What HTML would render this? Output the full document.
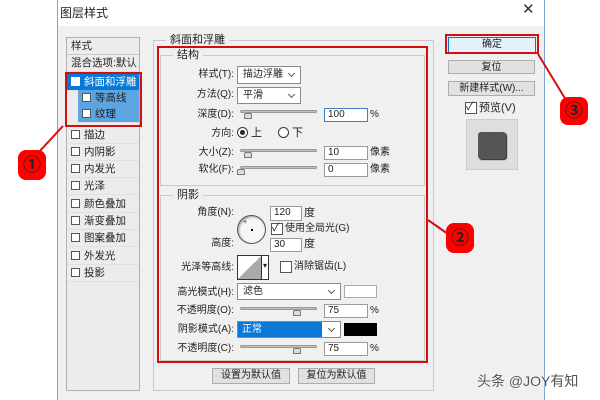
<!DOCTYPE html>
<html><head><meta charset="utf-8"><style>
*{margin:0;padding:0;box-sizing:border-box}
body{width:600px;height:400px;background:#fff;position:relative;overflow:hidden;font-family:"Liberation Sans","Noto Sans CJK SC",sans-serif;font-size:10px;color:#222}
.a{position:absolute}
.t{position:absolute;white-space:nowrap;line-height:12px}
.r{text-align:right}
.inp{position:absolute;background:#fff;border:1px solid #9a9a9a;font-size:10px;padding-left:3px;line-height:12px}
.dd{position:absolute;background:#fff;border:1px solid #8a8a8a;font-size:10px;padding-left:5px;line-height:15px}
.dd:after{content:"";position:absolute;right:6px;top:4px;width:4px;height:4px;border-right:1px solid #555;border-bottom:1px solid #555;transform:rotate(45deg)}
.sl{position:absolute;height:3px;background:#c0c0c0;border:1px solid #999;border-radius:2px}
.th{position:absolute;width:8px;height:6px;background:#ddd;border:1px solid #777;border-radius:2px 2px 0 0}
.cb{position:absolute;width:10px;height:10px;border:1px solid #555;background:#fff}
.btn{position:absolute;background:#e1e1e1;border:1px solid #adadad;text-align:center;font-size:10px;line-height:13px}
.grp{position:absolute;border:1px solid #c8c8c8}
.lbl{position:absolute;background:#f0f0f0;padding:0 4px;line-height:12px;font-size:11px}
.li{position:absolute;left:67px;width:72px;height:17px;border-bottom:1px solid #e0e0e0;line-height:16px;padding-left:4px;font-size:10.5px;white-space:nowrap;overflow:hidden}
.li i{display:inline-block;width:9px;height:9px;border:1px solid #555;background:#fff;margin-right:4px;vertical-align:-1px}
.num{position:absolute;background:#f00;border-radius:8px;color:#222;font-size:18px;text-align:center;font-weight:bold}
.red{position:absolute;border:2px solid #d01010}
</style></head><body>
<div class="a" style="left:57px;top:0;width:488px;height:400px;background:#f0f0f0;border-left:1px solid #7aa7d0;border-right:1px solid #7aa7d0"></div>
<div class="a" style="left:58px;top:0;width:486px;height:26px;background:#fff"></div>
<div class="t" style="left:60px;top:7px;font-size:12px">图层样式</div>
<div class="t" style="left:522px;top:4px;font-size:15px;color:#333">✕</div>

<div class="a" style="left:66px;top:37px;width:74px;height:354px;border:1px solid #b0b0b0;background:#ececec"></div>
<div class="li" style="top:38px;height:17px;border-bottom:1px solid #c8c8c8">样式</div>
<div class="li" style="top:55px">混合选项:默认</div>
<div class="li" style="top:74px;background:#0a78d7;color:#fff"><i style="border-color:#fff"></i>斜面和浮雕</div>
<div class="li" style="top:90px;left:78px;width:61px;background:#5ea4e0"><i></i>等高线</div>
<div class="li" style="top:106px;left:78px;width:61px;background:#5ea4e0"><i></i>纹理</div>
<div class="li" style="top:127px"><i></i>描边</div>
<div class="li" style="top:144px"><i></i>内阴影</div>
<div class="li" style="top:161px"><i></i>内发光</div>
<div class="li" style="top:178px"><i></i>光泽</div>
<div class="li" style="top:196px"><i></i>颜色叠加</div>
<div class="li" style="top:213px"><i></i>渐变叠加</div>
<div class="li" style="top:230px"><i></i>图案叠加</div>
<div class="li" style="top:248px"><i></i>外发光</div>
<div class="li" style="top:265px"><i></i>投影</div>
<div class="red" style="left:65px;top:72px;width:77px;height:55px"></div>

<div class="grp" style="left:153px;top:40px;width:281px;height:351px"></div>
<div class="lbl" style="left:166px;top:34px">斜面和浮雕</div>
<div class="grp" style="left:160px;top:55px;width:265px;height:131px"></div>
<div class="lbl" style="left:173px;top:49px">结构</div>
<div class="t r" style="left:160px;width:74px;top:69px">样式(T):</div>
<div class="dd" style="left:237px;top:66px;width:64px;height:18px">描边浮雕</div>
<div class="t r" style="left:160px;width:74px;top:89px">方法(Q):</div>
<div class="dd" style="left:237px;top:87px;width:64px;height:17px">平滑</div>
<div class="t r" style="left:160px;width:74px;top:109px">深度(D):</div>
<div class="sl" style="left:240px;top:110px;width:77px"></div><div class="th" style="left:244px;top:113px"></div>
<div class="inp" style="left:324px;top:108px;width:44px;height:14px;border-color:#3c7fc0">100</div>
<div class="t" style="left:370px;top:109px">%</div>
<div class="t r" style="left:160px;width:74px;top:128px">方向:</div>
<div class="a" style="left:237px;top:127px;width:11px;height:11px;border:1px solid #333;border-radius:50%;background:#fff"><div class="a" style="left:2px;top:2px;width:5px;height:5px;background:#222;border-radius:50%"></div></div>
<div class="t" style="left:251px;top:127px;font-size:11px">上</div>
<div class="a" style="left:278px;top:127px;width:11px;height:11px;border:1px solid #333;border-radius:50%;background:#fff"></div>
<div class="t" style="left:292px;top:127px;font-size:11px">下</div>
<div class="t r" style="left:160px;width:74px;top:147px">大小(Z):</div>
<div class="sl" style="left:240px;top:149px;width:77px"></div><div class="th" style="left:244px;top:152px"></div>
<div class="inp" style="left:324px;top:146px;width:44px;height:14px">10</div>
<div class="t" style="left:370px;top:147px">像素</div>
<div class="t r" style="left:160px;width:74px;top:164px">软化(F):</div>
<div class="sl" style="left:240px;top:166px;width:77px"></div><div class="th" style="left:237px;top:169px"></div>
<div class="inp" style="left:324px;top:163px;width:44px;height:14px">0</div>
<div class="t" style="left:370px;top:164px">像素</div>

<div class="grp" style="left:160px;top:195px;width:265px;height:166px"></div>
<div class="lbl" style="left:173px;top:189px">阴影</div>
<div class="t r" style="left:160px;width:74px;top:207px">角度(N):</div>
<div class="a" style="left:237px;top:215px;width:29px;height:29px;border:1px solid #555;border-radius:50%;background:#f6f6f6;box-shadow:inset 1px 1px 2px #999"><div class="a" style="left:13px;top:13px;width:2px;height:2px;background:#000"></div><div class="t" style="left:5px;top:1px;font-size:7px">+</div></div>
<div class="inp" style="left:270px;top:206px;width:32px;height:15px">120</div>
<div class="t" style="left:304px;top:207px;font-size:11px">度</div>
<div class="cb" style="left:271px;top:223px;width:12px;height:12px"><div class="t" style="left:0;top:-2px;font-size:11px">✓</div></div>
<div class="t" style="left:285px;top:223px">使用全局光(G)</div>
<div class="t r" style="left:160px;width:74px;top:238px">高度:</div>
<div class="inp" style="left:270px;top:238px;width:32px;height:14px">30</div>
<div class="t" style="left:304px;top:238px;font-size:11px">度</div>
<div class="t r" style="left:160px;width:74px;top:262px">光泽等高线:</div>
<div class="a" style="left:237px;top:255px;width:25px;height:25px;border:1px solid #333;background:linear-gradient(to bottom right,#fff 50%,#aaa 50%)"></div>
<div class="a" style="left:261px;top:255px;width:8px;height:25px;border:1px solid #333;background:#fff;font-size:8px;text-align:center;line-height:20px">▾</div>
<div class="cb" style="left:280px;top:261px;width:12px;height:12px"></div>
<div class="t" style="left:294px;top:261px">消除锯齿(L)</div>
<div class="t r" style="left:160px;width:74px;top:287px">高光模式(H):</div>
<div class="dd" style="left:237px;top:283px;width:104px;height:17px">滤色</div>
<div class="a" style="left:344px;top:285px;width:33px;height:13px;background:#fff;border:1px solid #aaa"></div>
<div class="t r" style="left:160px;width:74px;top:305px">不透明度(O):</div>
<div class="sl" style="left:240px;top:307px;width:77px"></div><div class="th" style="left:293px;top:310px"></div>
<div class="inp" style="left:324px;top:304px;width:44px;height:14px">75</div>
<div class="t" style="left:370px;top:305px">%</div>
<div class="t r" style="left:160px;width:74px;top:324px">阴影模式(A):</div>
<div class="dd" style="left:237px;top:321px;width:104px;height:17px;padding:0"><div style="background:#0a78d7;color:#fff;width:84px;height:15px;padding-left:4px">正常</div></div>
<div class="a" style="left:344px;top:323px;width:33px;height:13px;background:#000"></div>
<div class="t r" style="left:160px;width:74px;top:343px">不透明度(C):</div>
<div class="sl" style="left:240px;top:345px;width:77px"></div><div class="th" style="left:293px;top:348px"></div>
<div class="inp" style="left:324px;top:342px;width:44px;height:14px">75</div>
<div class="t" style="left:370px;top:343px">%</div>
<div class="red" style="left:157px;top:46px;width:271px;height:317px"></div>
<div class="btn" style="left:212px;top:368px;width:78px;height:16px">设置为默认值</div>
<div class="btn" style="left:298px;top:368px;width:77px;height:16px">复位为默认值</div>

<div class="btn" style="left:448px;top:37px;width:88px;height:16px;border:1px solid #0078d7;background:#e5f1fb">确定</div>
<div class="red" style="left:445px;top:34px;width:94px;height:20px"></div>
<div class="btn" style="left:448px;top:60px;width:87px;height:14px">复位</div>
<div class="btn" style="left:448px;top:81px;width:87px;height:15px">新建样式(W)...</div>
<div class="cb" style="left:465px;top:102px;width:12px;height:12px"><div class="t" style="left:0;top:-2px;font-size:11px">✓</div></div>
<div class="t" style="left:479px;top:102px;font-size:11px">预览(V)</div>
<div class="a" style="left:466px;top:119px;width:52px;height:51px;background:#dedede;border:1px solid #ccc"></div>
<div class="a" style="left:478px;top:132px;width:28px;height:27px;background:#555;border-radius:3px;box-shadow:1px 1px 1px #222"></div>

<svg class="a" style="left:0;top:0" width="600" height="400"><g stroke="#d01010" stroke-width="2"><line x1="63" y1="126" x2="38" y2="153"/><line x1="428" y1="220" x2="448" y2="234"/><line x1="538" y1="54" x2="566" y2="100"/></g></svg>
<div class="num" style="left:18px;top:150px;width:28px;height:30px;line-height:30px">①</div>
<div class="num" style="left:446px;top:223px;width:28px;height:30px;line-height:30px">②</div>
<div class="num" style="left:560px;top:97px;width:28px;height:28px;line-height:28px">③</div>
<div class="t" style="left:477px;top:373px;font-size:14px;line-height:16px;color:#555;text-shadow:0 0 2px #fff">头条 @JOY有知</div>
</body></html>
